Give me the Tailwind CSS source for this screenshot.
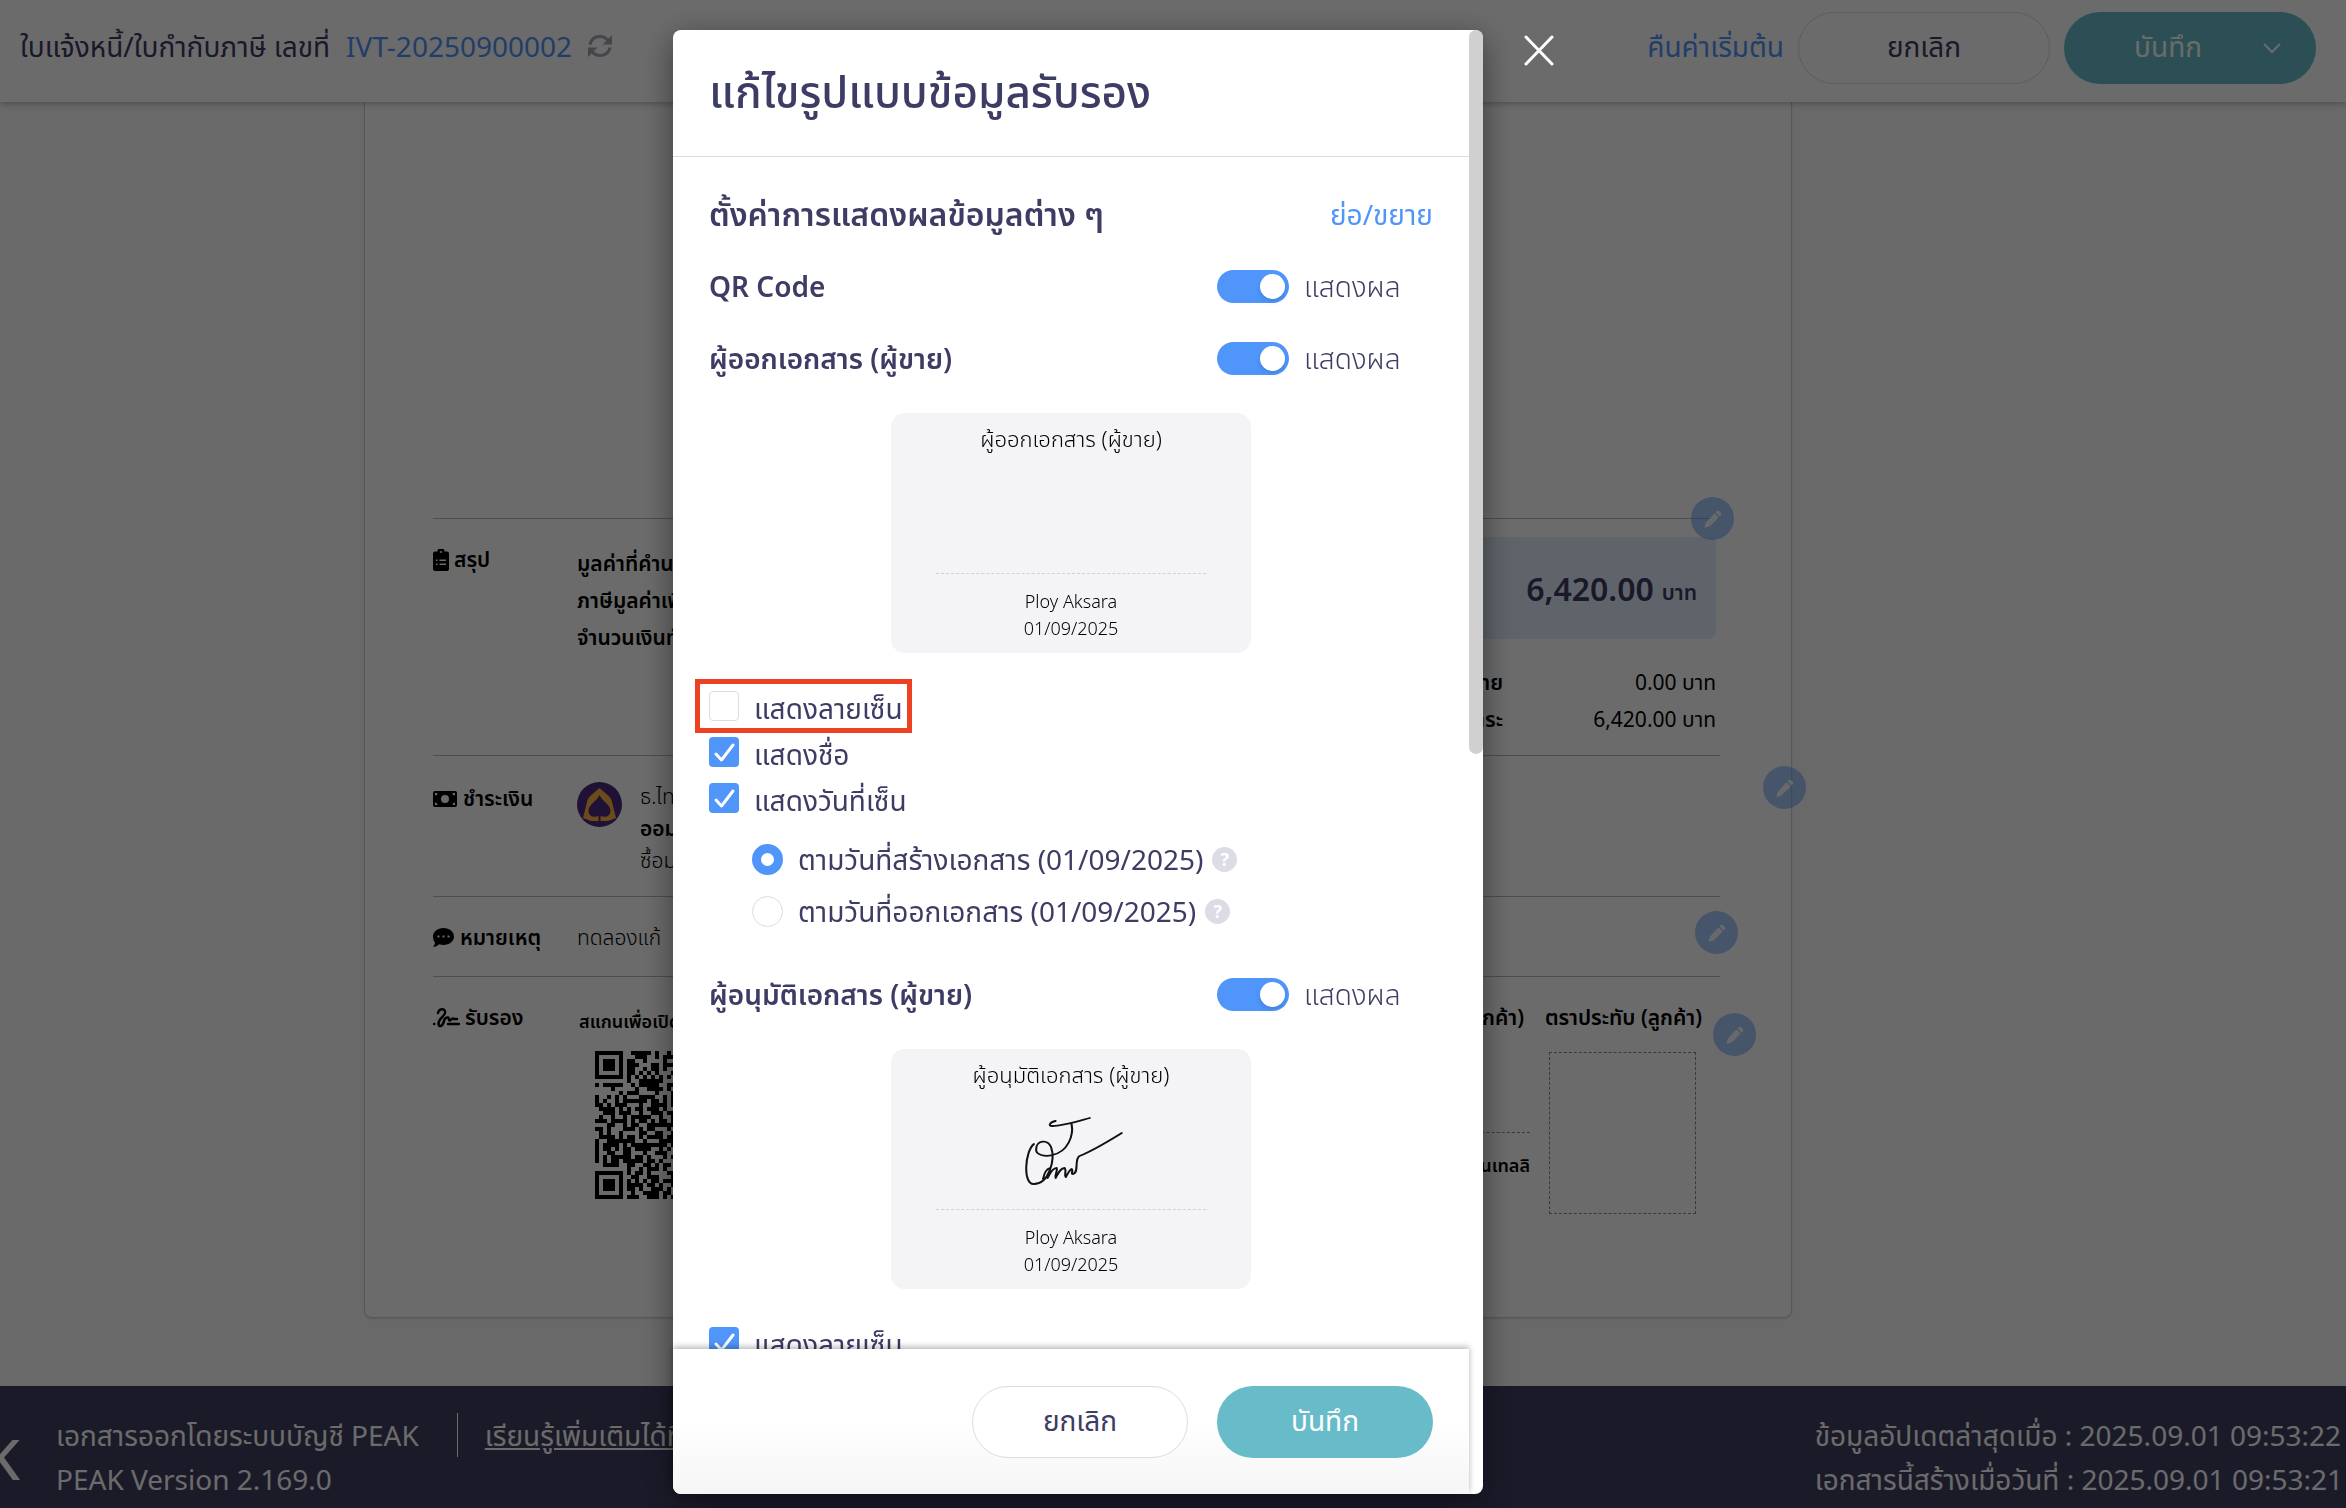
<!DOCTYPE html>
<html lang="th">
<head>
    <meta charset="UTF-8">
    <meta name="viewport" content="width=device-width, initial-scale=1.0">
    <title>แก้ไขรูปแบบข้อมูลรับรอง</title>

    <!-- Tailwind CSS -->
    <script src="https://cdn.jsdelivr.net/npm/@tailwindcss/browser@4"></script>
</head>
<body class="h-screen overflow-hidden bg-[#fafafa] font-['Noto_Sans','Noto_Sans_Thai',sans-serif] text-[28px] leading-[44px] text-[#3d3c64]">

    <!-- Icons used more than once -->
    <svg class="hidden">
        <symbol id="pencil" viewBox="0 0 18 18">
            <path fill="currentColor" d="M10.500 3.200l4.300 4.300L6.500 15.500c-1.200 1.200-3.300 1.800-6 2.200.3-2.700 1-4.800 2.200-6zM11.500 2.300l1.200-1.200c1.700-1.700 5.900 2.300 4.200 4.200l-1.200 1.300z"/>
        </symbol>
        <symbol id="tick" viewBox="0 0 30 30">
            <path fill="none" stroke="currentColor" stroke-width="3" stroke-linecap="round" stroke-linejoin="round" d="M7 17l5.500 6L24 8"/>
        </symbol>
    </svg>

    <div class="flex h-full flex-col">
        <!-- Top bar -->
        <header class="z-10 flex h-[102px] shrink-0 items-start justify-between bg-white pt-3 pr-[30px] pl-5 shadow-[0_2px_6px_rgba(0,0,0,0.25)]">
            <div class="flex h-[68px] items-center gap-4 whitespace-nowrap">
                <span>ใบแจ้งหนี้/ใบกำกับภาษี เลขที่</span>
                <a href="#" class="text-[#4f95fa]">IVT-20250900002</a>
                <button type="button" aria-label="รีเฟรช" class="text-[#a5a5b4]">
                    <svg class="size-6" viewBox="0 0 24 24" fill="none" stroke="currentColor" stroke-width="3.200">
                        <path d="M2 10.500C3 5.500 7 2.500 12 2.500c3.500 0 6 1.500 8 4M22 13.500c-1 5-5 8-10 8-3.500 0-6-1.500-8-4"/>
                        <path fill="currentColor" stroke="none" d="M24 1v9.500h-9.500zM0 23v-9.500h9.500z"/>
                    </svg>
                </button>
            </div>
            <div class="flex items-center gap-[14px] whitespace-nowrap">
                <a href="#" class="pb-1 text-[#4f95fa]">คืนค่าเริ่มต้น</a>
                <button type="button" class="h-[72px] w-[252px] rounded-full border border-[#dcdce6] pb-1">ยกเลิก</button>
                <button type="button" class="flex h-[72px] w-[252px] items-center justify-end gap-[60px] rounded-full bg-[#68bcc9] pr-[34px] text-white">
                    <span class="pb-1">บันทึก</span>
                    <svg class="size-5" viewBox="0 0 20 20" fill="none" stroke="currentColor" stroke-width="2"><path d="M2 6l8 8 8-8"/></svg>
                </button>
            </div>
        </header>

        <!-- Document -->
        <main class="flex flex-1 justify-center pr-[190px] pb-[68px]">
            <div class="relative flex w-[1428px] flex-col rounded-b-lg border border-t-0 border-[#d2d2d2] bg-white pt-[416px] pr-[71px] pl-[68px] text-[21px] leading-[37px] text-black shadow-sm">
                <section class="flex h-[237px] border-t border-[#b7b7b7]">
                    <h2 class="mt-[22px] flex h-[37px] w-[144px] shrink-0 items-center gap-[5px] font-semibold">
                        <svg class="h-[22px] w-4" viewBox="0 0 16 22"><path fill-rule="evenodd" d="M2 2.500h2.500a3.500 3.500 0 0 1 7 0H14a2 2 0 0 1 2 2V20a2 2 0 0 1-2 2H2a2 2 0 0 1-2-2V4.500a2 2 0 0 1 2-2zM8 2a1 1 0 1 0 0 2 1 1 0 0 0 0-2zM3 10.500v1.500h1.500v-1.500zM6.500 10.500v1.500H13v-1.500zM3 14.500V16h1.500v-1.500zM6.500 14.500V16H13v-1.500z"/></svg>
                        สรุป
                    </h2>
                    <div class="flex-1 pt-[26px] font-semibold">
                        <p>มูลค่าที่คำนวณภาษี 7%</p>
                        <p>ภาษีมูลค่าเพิ่ม 7%</p>
                        <p>จำนวนเงินทั้งสิ้น</p>
                    </div>
                    <div class="mr-1 w-[600px] pt-[18px]">
                        <div class="flex h-[102px] items-center justify-end gap-2 rounded-lg bg-[#e2eeff] pr-[19px] font-semibold text-[#3d3c64]">
                            <span class="text-[32px]">6,420.00</span><span class="pt-2">บาท</span>
                        </div>
                        <dl class="grid grid-cols-[1fr_213px] pt-[25px] text-right">
                            <dt class="font-semibold">ถูกหัก ณ ที่จ่าย</dt><dd>0.00 บาท</dd>
                            <dt class="font-semibold">จำนวนเงินที่ต้องชำระ</dt><dd>6,420.00 บาท</dd>
                        </dl>
                    </div>
                </section>

                <section class="flex h-[141px] border-t border-[#b7b7b7] pt-[24px]">
                    <h2 class="flex h-[37px] w-[144px] shrink-0 items-center gap-1.5 font-semibold">
                        <svg class="h-4 w-6" viewBox="0 0 24 16"><path fill-rule="evenodd" d="M2 0h20a2 2 0 0 1 2 2v12a2 2 0 0 1-2 2H2a2 2 0 0 1-2-2V2a2 2 0 0 1 2-2zM12 4a4 4 0 1 0 0 8 4 4 0 0 0 0-8zM2 2v2.500A2.500 2.500 0 0 0 4.500 2zM22 2h-2.500A2.500 2.500 0 0 0 22 4.500zM2 14h2.500A2.500 2.500 0 0 0 2 11.500zM22 14v-2.500a2.500 2.500 0 0 0-2.500 2.500z"/></svg>
                        ชำระเงิน
                    </h2>
                    <svg class="mt-0.5 size-[45px]" viewBox="0 0 45 45">
                        <circle cx="22.500" cy="22.500" r="22.500" fill="#4e2a80"/>
                        <path fill="#ffb43c" fill-rule="evenodd" d="M22.500 6C28 11 33 14 34.500 18L39 36 31 39h-7.500v-5c5 2 10 0 10-5 0-7-8-9-11-16-3 7-11 9-11 16 0 5 5 7 10 5v5H14L6 36l4.500-18C12 14 17 11 22.500 6z"/>
                    </svg>
                    <div class="ml-[18px] leading-8 font-light whitespace-nowrap">
                        <p>ธ.ไทยพาณิชย์</p>
                        <p class="font-semibold">ออมทรัพย์</p>
                        <p>ซื้อมาขายไป</p>
                    </div>
                </section>

                <section class="flex h-[80px] border-t border-[#b7b7b7] pt-[22px]">
                    <h2 class="flex h-[37px] w-[144px] shrink-0 items-center gap-1.5 font-semibold">
                        <svg class="h-[19px] w-[21px]" viewBox="0 0 21 19"><path fill-rule="evenodd" d="M10.500 0C16.500 0 21 4 21 8.500S16.500 17 10.500 17c-1.500 0-3-.3-4.300-.8C4.500 17.800 2.500 19 0 19c1-1.200 2-3 2-4.500C.7 13 0 11 0 8.500 0 4 4.500 0 10.500 0zM4.500 7.500v2h2v-2zM9.500 7.500v2h2v-2zM14.500 7.500v2h2v-2z"/></svg>
                        หมายเหตุ
                    </h2>
                    <p class="font-light">ทดลองแก้</p>
                </section>

                <section class="flex border-t border-[#b7b7b7] pt-[22px]">
                    <h2 class="flex h-[37px] w-[144px] shrink-0 items-center gap-[5px] font-semibold">
                        <svg class="h-5 w-[27px]" viewBox="0 0 27 20" fill="none" stroke="currentColor" stroke-width="2.400" stroke-linecap="round"><path d="M5 5c1-5 8-5 7 0-1 4-7 6-6.500 11C6 20 10 18 11 13c.3-1.500 1-3 3-3.500 3-1 1 3.500 3 3 1.500-.5 2-3 4-1.500h3M15 16h11M1 16h.3"/></svg>
                        รับรอง
                    </h2>
                    <div class="w-[200px] shrink-0 pt-1 pl-0.5 text-[18px] font-semibold">
                        <p>สแกนเพื่อเปิดด้วยเว็บไซต์</p>
                        <svg id="qr" class="mt-[11px] ml-4 size-[148px]" viewBox="0 0 37 37" shape-rendering="crispEdges"></svg>
                    </div>
                    <div class="ml-auto text-right font-semibold whitespace-nowrap">
                        <p class="pr-1.5">ผู้รับเอกสาร (ลูกค้า)</p>
                        <div class="ml-auto h-[97px] w-[160px] border-b border-dashed border-[#888]"></div>
                        <p class="pt-[14px] text-[18px]">บริษัท อินเทลลิ</p>
                    </div>
                    <div class="mr-[18px] ml-3 w-[160px] font-semibold">
                        <p class="text-right whitespace-nowrap">ตราประทับ (ลูกค้า)</p>
                        <div class="mx-auto mt-4 h-[162px] w-[147px] border border-dashed border-[#888]"></div>
                    </div>
                </section>

                <!-- Edit badges over the card -->
                <button type="button" aria-label="แก้ไขสรุป" class="absolute top-[395px] right-[57px] grid size-[43px] place-items-center rounded-full bg-[#4f95fa]/50 text-white/90"><svg class="size-[18px]"><use href="#pencil"/></svg></button>
                <button type="button" aria-label="แก้ไขชำระเงิน" class="absolute top-[664px] -right-[15px] grid size-[43px] place-items-center rounded-full bg-[#4f95fa]/50 text-white/90"><svg class="size-[18px]"><use href="#pencil"/></svg></button>
                <button type="button" aria-label="แก้ไขหมายเหตุ" class="absolute top-[809px] right-[53px] grid size-[43px] place-items-center rounded-full bg-[#4f95fa]/50 text-white/90"><svg class="size-[18px]"><use href="#pencil"/></svg></button>
                <button type="button" aria-label="แก้ไขรับรอง" class="absolute top-[911px] right-[35px] grid size-[43px] place-items-center rounded-full bg-[#4f95fa]/50 text-white/90"><svg class="size-[18px]"><use href="#pencil"/></svg></button>
            </div>
        </main>

        <!-- Page footer -->
        <footer class="flex h-[122px] shrink-0 items-start overflow-hidden bg-[#403e62] pt-[27px] whitespace-nowrap text-white">
            <div class="mt-[20px] mr-[36px] flex w-5 justify-end overflow-hidden text-[57px] leading-[50px] font-medium">K</div>
            <div>
                <p>เอกสารออกโดยระบบบัญชี PEAK</p>
                <p>PEAK Version 2.169.0</p>
            </div>
            <a href="#" class="ml-[38px] border-l border-white pl-[27px] underline">เรียนรู้เพิ่มเติมได้ที่นี่</a>
            <div class="mr-[3px] ml-auto">
                <p>ข้อมูลอัปเดตล่าสุดเมื่อ : 2025.09.01 09:53:22</p>
                <p>เอกสารนี้สร้างเมื่อวันที่ : 2025.09.01 09:53:21</p>
            </div>
        </footer>
    </div>

    <!-- Modal -->
    <div class="fixed inset-0 z-20 flex justify-center bg-black/58 pt-[30px] pr-[190px] pb-[14px]">
        <div role="dialog" aria-labelledby="modal-title" class="relative flex w-[810px] flex-col rounded-lg bg-white shadow-[0_8px_32px_rgba(0,0,0,0.45)]">
            <button type="button" aria-label="ปิด" class="absolute top-[4px] -right-[72px] text-white">
                <svg class="size-[32px]" viewBox="0 0 32 32" fill="none" stroke="currentColor" stroke-width="3" stroke-linecap="round"><path d="M3 3l26 27M29 3L3 30"/></svg>
            </button>
            <!-- Scroll thumb -->
            <div class="absolute top-0 right-0 h-[724px] w-[14px] rounded-full bg-[#d0d0d0]"></div>

            <h1 id="modal-title" class="mr-[14px] flex h-[127px] shrink-0 items-center border-b border-[#dcdce6] pb-1 pl-9 text-[44px] font-medium">แก้ไขรูปแบบข้อมูลรับรอง</h1>

            <div class="min-h-0 flex-1 overflow-hidden pt-[21px] pr-[50px] pl-9">
                <div class="flex h-[72px] items-center justify-between">
                    <h2 class="text-[32px] font-semibold">ตั้งค่าการแสดงผลข้อมูลต่าง ๆ</h2>
                    <a href="#" class="text-[#4f95fa]">ย่อ/ขยาย</a>
                </div>

                <div class="flex h-[72px] items-center justify-between">
                    <h3 class="font-semibold">QR Code</h3>
                    <label class="flex w-[216px] items-center gap-[15px] font-light">
                        <input type="checkbox" checked class="h-[33px] w-[72px] appearance-none rounded-full bg-[#dcdce6] p-1 before:block before:size-[25px] before:rounded-full before:bg-white before:shadow-md before:content-[''] checked:bg-[#4f95fa] checked:before:ml-auto">
                        แสดงผล
                    </label>
                </div>

                <div class="flex h-[72px] items-center justify-between">
                    <h3 class="font-semibold">ผู้ออกเอกสาร (ผู้ขาย)</h3>
                    <label class="flex w-[216px] items-center gap-[15px] font-light">
                        <input type="checkbox" checked class="h-[33px] w-[72px] appearance-none rounded-full bg-[#dcdce6] p-1 before:block before:size-[25px] before:rounded-full before:bg-white before:shadow-md before:content-[''] checked:bg-[#4f95fa] checked:before:ml-auto">
                        แสดงผล
                    </label>
                </div>

                <div class="mx-auto mt-[19px] h-[240px] w-[360px] rounded-[14px] bg-[#f4f4f7] px-[45px] text-center text-[18px] leading-[27px] font-light text-black">
                    <p class="pt-3 text-[22px]">ผู้ออกเอกสาร (ผู้ขาย)</p>
                    <div class="mb-[14px] h-[122px] border-b border-dashed border-[#d0d0d6]"></div>
                    <p>Ploy Aksara</p>
                    <p>01/09/2025</p>
                </div>

                <div class="relative mt-[30px]">
                    <label class="flex h-[46px] items-center gap-[15px]">
                        <input type="checkbox" class="size-[30px] appearance-none rounded border border-[#dcdce6]">
                        <span class="pt-1">แสดงลายเซ็น</span>
                    </label>
                    <div class="pointer-events-none absolute -top-1 -left-[14px] h-[54px] w-[217px] border-[5px] border-[#ee4023]"></div>
                </div>
                <label class="flex h-[46px] items-center gap-[15px]">
                    <span class="grid size-[30px]">
                        <input type="checkbox" checked class="col-start-1 row-start-1 size-[30px] appearance-none rounded bg-[#4f95fa]">
                        <svg class="pointer-events-none col-start-1 row-start-1 size-[30px] text-white"><use href="#tick"/></svg>
                    </span>
                    <span class="pt-1">แสดงชื่อ</span>
                </label>
                <label class="flex h-[46px] items-center gap-[15px]">
                    <span class="grid size-[30px]">
                        <input type="checkbox" checked class="col-start-1 row-start-1 size-[30px] appearance-none rounded bg-[#4f95fa]">
                        <svg class="pointer-events-none col-start-1 row-start-1 size-[30px] text-white"><use href="#tick"/></svg>
                    </span>
                    <span class="pt-1">แสดงวันที่เซ็น</span>
                </label>

                <div class="mt-3 pl-[43px]">
                    <div class="flex h-[52px] items-center gap-[9px]">
                        <label class="flex items-center gap-[15px]">
                            <input type="radio" name="sign-date" checked class="size-[31px] appearance-none rounded-full border border-[#dcdce6] checked:border-[9px] checked:border-[#4f95fa]">
                            ตามวันที่สร้างเอกสาร (01/09/2025)
                        </label>
                        <button type="button" class="size-[25px] rounded-full bg-[#dcdce6] text-[18px] leading-[25px] font-bold text-white">?</button>
                    </div>
                    <div class="flex h-[52px] items-center gap-[9px]">
                        <label class="flex items-center gap-[15px]">
                            <input type="radio" name="sign-date" class="size-[31px] appearance-none rounded-full border border-[#dcdce6] checked:border-[9px] checked:border-[#4f95fa]">
                            ตามวันที่ออกเอกสาร (01/09/2025)
                        </label>
                        <button type="button" class="size-[25px] rounded-full bg-[#dcdce6] text-[18px] leading-[25px] font-bold text-white">?</button>
                    </div>
                </div>

                <div class="mt-[21px] flex h-[72px] items-center justify-between">
                    <h3 class="font-semibold">ผู้อนุมัติเอกสาร (ผู้ขาย)</h3>
                    <label class="flex w-[216px] items-center gap-[15px] font-light">
                        <input type="checkbox" checked class="h-[33px] w-[72px] appearance-none rounded-full bg-[#dcdce6] p-1 before:block before:size-[25px] before:rounded-full before:bg-white before:shadow-md before:content-[''] checked:bg-[#4f95fa] checked:before:ml-auto">
                        แสดงผล
                    </label>
                </div>

                <div class="mx-auto mt-[19px] h-[240px] w-[360px] rounded-[14px] bg-[#f4f4f7] px-[45px] text-center text-[18px] leading-[27px] font-light text-black">
                    <p class="pt-3 text-[22px]">ผู้อนุมัติเอกสาร (ผู้ขาย)</p>
                    <div class="mb-[14px] flex h-[122px] justify-center border-b border-dashed border-[#d0d0d6] pt-[28px]">
                        <svg class="h-[70px] w-[114px]" viewBox="-5.500 0 100 70" preserveAspectRatio="none" fill="none" stroke="#111" stroke-width="1.800" stroke-linecap="round" stroke-linejoin="round">
                            <path d="M31 5c-5 1-7 5-3 5 9 0 20-4 33-8M45 8c2 11-3 28-17 31-6 2-15 0-14-6 0-9 10-10 13-2 4 13-2 37-15 37C2 69 4 35 12 28M20 63c1-6 3-10 6-11 0 4-2 8-2 10 2-5 5-10 8-10 1 3-2 7-1 10 2-4 4-10 8-10 2 3-1 7 1 9 1-2 3-7 5-8 2 1-1 5 1 5 6-1 1-15 6-18 13-6 27-16 37-23"/>
                        </svg>
                    </div>
                    <p>Ploy Aksara</p>
                    <p>01/09/2025</p>
                </div>

                <label class="mt-[30px] flex h-[46px] items-center gap-[15px]">
                    <span class="grid size-[30px]">
                        <input type="checkbox" checked class="col-start-1 row-start-1 size-[30px] appearance-none rounded bg-[#4f95fa]">
                        <svg class="pointer-events-none col-start-1 row-start-1 size-[30px] text-white"><use href="#tick"/></svg>
                    </span>
                    <span class="pt-1">แสดงลายเซ็น</span>
                </label>
            </div>

            <div class="relative mr-[14px] flex h-[145px] shrink-0 items-center justify-end gap-[29px] rounded-bl-lg bg-linear-to-b from-white from-50% to-[#f5f5f5] pr-9 shadow-[0_-2px_6px_rgba(0,0,0,0.3)]">
                <button type="button" class="h-[72px] w-[216px] rounded-full border border-[#dcdce6] bg-white pb-1">ยกเลิก</button>
                <button type="button" class="h-[72px] w-[216px] rounded-full bg-[#68bcc9] pb-1 text-white">บันทึก</button>
            </div>
        </div>
    </div>

    <script>
        // QR modules, one string per row
        const rows = [
            "#######..#####.#..#.#.#..#.##.#######",
            "#.....#...###..#.####..#.##...#.....#",
            "#.###.#.##..#....#...#.##..#..#.###.#",
            "#.###.#.###...##.###.#..##.##.#.###.#",
            "#.###.#.##..#.##.#..###.#..#..#.###.#",
            "#.....#.##.#.#.#...#..#.###.#.#.....#",
            "#######.#.#.#.#.#.#.#.#.#.#.#.#######",
            "........#..######.....#.##...........",
            "#.#####..#.#####..##..#.##..#.##.#..#",
            "....#.....#..####.#.###..#.#..##.##..",
            "......#.###....#...#.#.##..#.##..#.#.",
            "#..#.#.#...####..#.#..##..##.#.##.#..",
            "#.#..#.######.##.#.#.##..#.##.#..##..",
            "##.#.###...#..####.#..#.##..##..#.#.#",
            ".####.#.#.##.###.#...##.#.##..#.##..#",
            "..###.###..#..###.##.#..##.#.#.#..##.",
            ".#..#..#.#####..#..#.##..#.##..#.#.#.",
            "###.####.#.##.#.##.#..#.##...##.##..#",
            "...##..#.##..#######.#.##.#.#..##.#..",
            "##.#...###.#.##...#.##..#.#.##.#..#.#",
            ".#.#..#....##..##..#.#.#..##..#.##.##",
            ".####.#.##.#.####.##..##.#.#.##..#.#.",
            "#..#######..#...#####.#..##..#.#.##..",
            "#.####.#.#########.#.##.#..##..##.#.#",
            "#.##.#.##.####..#.#.#.#..#.#.##..#..#",
            "#..##..##...#..###..##.##..##..#.##..",
            "#.#.#####.##.#...#.#.#..##..#.##..#.#",
            "#.#.##.#####.##.#...#.##.#.##.#.##..#",
            "..####..##..##.#.##.#..##.#..##..#.#.",
            "........#..#.###.#...##..##.#.#.##..#",
            "#######.#.##.#....##.#.##..##.#.#.##.",
            "#.....#..##..###...##..#.##.#...###..",
            "#.###.#.#.#.#.##.###.#.#.#..#####..#.",
            "#.###.#.####.##.#..#..##..##.#.##.##.",
            "#.###.#.##.#..###.#.##..#.#..##..#..#",
            "#.....#..#..####.##.#.##..##.#.#.##.#",
            "#######.###..###.#.#.#..##.#..##.#.#."
        ];
        let path = "";
        rows.forEach((row, y) => {
            [...row].forEach((cell, x) => {
                if (cell === "#") path += `M${x} ${y}h1v1h-1z`;
            });
        });
        document.getElementById("qr").innerHTML = `<path d="${path}"/>`;
    </script>

</body>
</html>
